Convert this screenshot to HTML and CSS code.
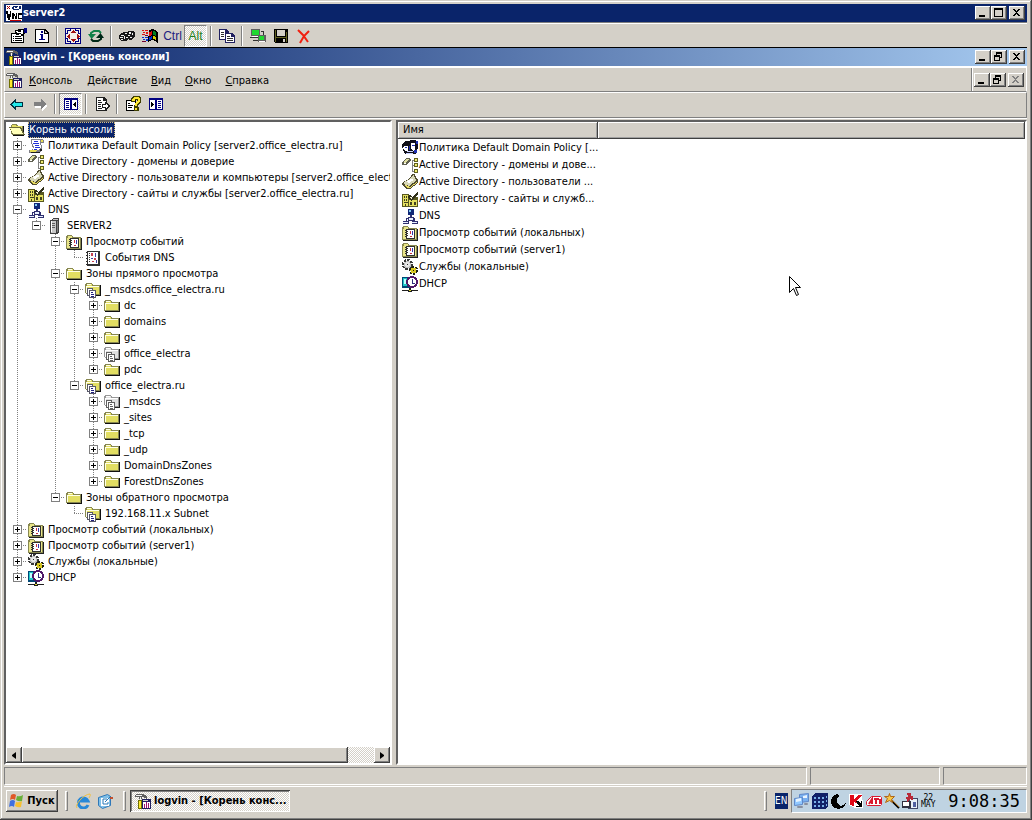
FILE: index.html
```html
<!DOCTYPE html>
<html lang="ru">
<head>
    <meta charset="UTF-8">
    <meta name="viewport" content="width=device-width, initial-scale=1.0">
    <title>server2</title>
    <link rel="stylesheet" href="styles.css">
</head>
<body>
    <svg class="sprite" aria-hidden="true">
        <symbol id="vnc" viewBox="0 0 16 16">
            <path fill="#fff" d="M0 0h16v16H0z"/>
            <path fill="#a00000" d="M1 1h1v1H1zM3 1h1v1H3zM2 2h1v1H2zM1 3h1v1H1zM3 3h1v1H3z"/>
            <path fill="#0a246a" d="M7 1h5v1H7zM6 2h2v2H6zM7 4h6v1H7zM13 1h2v3h-2zM9 2h2v1H9z"/>
            <path fill="#000" d="M0 6h2v3H0zM1 9h2v4H1zM2 12h2v3H2zM3 9h2v3H3zM4 6h1v3H4zM6 8h2v6H6zM8 9h1v2H8zM9 11h1v3H9zM10 8h1v6h-1zM12 8h4v2h-3v3h3v1h-4z"/>
            <path fill="#c00000" d="M4 15h11v1H4z"/>
        </symbol>
        <symbol id="mmc" viewBox="0 0 16 16">
            <path fill="#202060" d="M7 6h9v10H7z"/>
            <path fill="#fff" d="M8 9h7v6H8z"/>
            <path fill="#d4d0c8" d="M8 7h5v1H8z"/>
            <path fill="#a01070" d="M9 11h1v4H9zM11 9h1v6h-1zM13 10h1v5h-1z"/>
            <path fill="#606060" d="M1 1h8v1h2v1h1v3h-1V5H9V4H7v2H4V4H0V2h1z"/>
            <path fill="#f4f4f4" d="M1 2h6v1H1zM5 4h1v3H5z"/>
            <path fill="#707000" d="M3 7h4v9H3z"/>
            <path fill="#ffe830" d="M4 8h2v7H4z"/>
        </symbol>
        <symbol id="props" viewBox="0 0 16 16">
            <path fill="#000" d="M0 5h13v10H0z"/>
            <path fill="#fff" d="M1 6h11v8H1z"/>
            <path fill="#000" d="M2 8h1v1H2zM4 8h6v1H4zM2 10h1v1H2zM4 10h7v1H4zM2 12h1v1H2zM4 12h7v1H4z"/>
            <path fill="#000" d="M4 2h3V1h6v1h1v4h-1v1h-1v1h-2V6H8v1H5V5H4z"/>
            <path fill="#fff" d="M5 3h2v1h3V2h2v4h-2V5H6V4H5z"/>
            <path fill="#000080" d="M13 0h3v5h-3z"/>
        </symbol>
        <symbol id="info" viewBox="0 0 16 16">
            <path fill="#000" d="M1 1h10l4 4v10H1z"/>
            <path fill="#fff" d="M2 2h8v4h4v8H2z"/>
            <path fill="#d4d0c8" d="M11 3l2 2h-2z"/>
            <path fill="#000080" d="M7 3h2v2H7zM6 6h3v5h2v1H5v-1h2V7H6z"/>
        </symbol>
        <symbol id="fullscreen" viewBox="0 0 16 16">
            <path fill="#000080" d="M0 0h16v16H0z"/>
            <path fill="#f4f0e8" d="M1 1h14v14H1z"/>
            <path fill="#000080" d="M5 0h1v3H3v3H0V5h2V2h3zM10 0h1v2h3v3h2v1h-3V3h-3zM0 10h3v3h3v3H5v-2H2v-3H0zM13 10h3v1h-2v3h-3v2h-1v-3h3z"/>
            <path fill="#a01010" d="M8 2h1v1h1v1h1v1H6V4h1V3h1zM6 11h5v1h-1v1H9v1H8v-1H7v-1H6zM2 8h1V7h1V6h1v5H4v-1H3V9H2zM12 6v5h1v-1h1V9h1V8h-1V7h-1V6z"/>
        </symbol>
        <symbol id="refresh" viewBox="0 0 16 16">
            <path fill="none" stroke="#108048" stroke-width="2" d="M3 8V5l3-2h5l2 2"/>
            <path fill="#108048" d="M0 6l3.500 5L8 6z"/>
            <path fill="none" stroke="#002818" stroke-width="2" d="M13 8v3l-3 2H5l-2-2"/>
            <path fill="#002818" d="M8 10l4.500-5L16 10z"/>
        </symbol>
        <symbol id="keys" viewBox="0 0 16 16">
            <path fill="#181818" d="M1 6l4-2h3l2-1h5l1 2v3l-3 4h-3v-2l-3 3H2L0 11V9z"/>
            <path fill="#f0f0f0" d="M2 7h3v1H2zM1 9h3v1H1zM6 5h2v1H6zM5 8h1v3H5zM7 9h2v1H7zM10 4h2v2h-2zM9 7h2v1H9zM13 5h1v2h-1zM11 9h2v1h-2zM2 11h2v1H2z"/>
        </symbol>
        <symbol id="winlogo" viewBox="0 0 16 16">
            <path fill="#000" d="M7 2l3-1 3 1 3 2v11l-3-2-3-1-4 2z"/>
            <path fill="#e01010" d="M7 4l3-1v4l-3 1zM0 2h2v1H0zM3 2h3v1H3zM1 4h2v1H1zM4 4h2v2H4zM0 6h3v1H0z"/>
            <path fill="#008020" d="M11 3l3 1v4l-3-1z"/>
            <path fill="#0030d0" d="M7 9l3-1v3l-3 1zM0 9h2v1H0zM3 9h3v1H3zM1 11h2v1H1zM4 11h2v2H4z"/>
            <path fill="#d8d000" d="M11 8l3 1v3l-3-1z"/>
            <path fill="#700030" d="M3 7h3v1H3zM0 13h4v1H0z"/>
        </symbol>
        <symbol id="copy" viewBox="0 0 16 16">
            <path fill="#202060" d="M0 1h7l3 3v8H0z"/>
            <path fill="#fff" d="M1 2h5v3h3v6H1z"/>
            <path fill="#202060" d="M6 5h7l3 3v7H6z"/>
            <path fill="#fff" d="M7 6h5v3h3v5H7z"/>
            <path fill="#303030" d="M2 4h3v1H2zM2 6h3v1H2zM2 8h3v1H2zM8 8h3v1H8zM8 10h6v1H8zM8 12h6v1H8z"/>
        </symbol>
        <symbol id="link" viewBox="0 0 16 16">
            <path fill="#606060" d="M1 1h9v7H1zM8 7h8v7H8z"/>
            <path fill="#20d830" d="M2 2h7v5H2zM9 8h5v4H9z"/>
            <path fill="#303030" d="M0 9h8v1H0zM11 3h3v1h-3zM13 4h1v3h-1zM3 12h5v1H3z"/>
            <path fill="#fff" d="M2 8h6v1H2zM9 13h6v1H9z"/>
        </symbol>
        <symbol id="save" viewBox="0 0 16 16">
            <path fill="#000" d="M1 1h14v14H2l-1-1z"/>
            <path fill="#606020" d="M2 2h1v12H2zM13 4h1v10h-1zM3 9h10v1H3z"/>
            <path fill="#d4d0c8" d="M4 2h8v6H4zM10 11h2v3h-2z"/>
        </symbol>
        <symbol id="cross" viewBox="0 0 16 16">
            <path fill="none" stroke="#f02010" stroke-width="2" d="M2 2l5 5 5 7M13 3L8 8l-4 7"/>
        </symbol>
        <symbol id="back" viewBox="0 0 16 16">
            <path fill="#003040" d="M1 8l5-5h1v3h7v5H7v3H6L1 9z"/>
            <path fill="#20e8e8" d="M3 8l3-3v2h7v3H6v2L3 9z"/>
        </symbol>
        <symbol id="forward" viewBox="0 0 16 16">
            <path fill="#fff" d="M15 10l-5-5v3H3v4h7v3z"/>
            <path fill="#808080" d="M14 8L9 3v3H2v4h7v3z"/>
        </symbol>
        <symbol id="panes" viewBox="0 0 16 16">
            <path fill="#000080" d="M1 2h14v12H1z"/>
            <path fill="#fff" d="M2 4h5v9H2zM9 4h5v9H9z"/>
            <path fill="#000080" d="M3 5h3v1H3zM3 7h3v1H3zM3 9h3v1H3zM3 11h3v1H3z"/>
            <path fill="#000" d="M13 6v5l-3-2V8z"/>
        </symbol>
        <symbol id="panes2" viewBox="0 0 16 16">
            <path fill="#000080" d="M1 2h14v12H1z"/>
            <path fill="#fff" d="M2 4h5v9H2zM9 4h5v9H9z"/>
            <path fill="#000080" d="M10 5h3v1h-3zM10 7h3v1h-3zM10 9h3v1h-3zM10 11h3v1h-3z"/>
            <path fill="#000" d="M3 6v5l3-2V8z"/>
        </symbol>
        <symbol id="export" viewBox="0 0 16 16">
            <path fill="#202020" d="M2 1h8l3 3v11H2z"/>
            <path fill="#fff" d="M3 2h6v3h3v9H3z"/>
            <path fill="#202020" d="M4 4h3v1H4zM4 6h4v1H4zM4 8h3v1H4zM4 10h3v1H4zM4 12h4v1H4z"/>
            <path fill="#202020" d="M8 8h3V6h1l4 4-4 4h-1v-2H8z"/>
            <path fill="#fff" d="M9 9h3V8l2 2-2 2v-1H9z"/>
        </symbol>
        <symbol id="help" viewBox="0 0 16 16">
            <path fill="#000" d="M1 4h10v11H1z"/>
            <path fill="#fff" d="M2 5h8v9H2z"/>
            <path fill="#000" d="M3 7h2v1H3zM3 9h5v1H3zM3 11h4v1H3z"/>
            <path fill="#404000" d="M6 2l2-2h6l2 2v4l-3 3v2l1 1v2l-1 1H9v-4l1-3 2-2V4h-2v2H6z"/>
            <path fill="#ffe830" d="M7 3l2-2h4l2 2v3l-3 2v2h-2V7l3-2V3h-3v2H7zM10 12h2v2h-2z"/>
        </symbol>
        <symbol id="folder" viewBox="0 0 16 16">
            <path fill="#101010" d="M1 13h14V4h1v10H1z"/>
            <path fill="#888850" d="M0 13V3h1V2h6v1h1v1h7v9z"/>
            <path fill="#e2de62" d="M1 5h13v7H1zM2 3h5v2H2z"/>
            <path fill="#ffffe8" d="M1 5h13v1H1zM1 5h1v7H1zM2 3h4v1H2z"/>
        </symbol>
        <symbol id="folder-open" viewBox="0 0 16 16">
            <path fill="#101010" d="M4 4h11v10H4z"/>
            <path fill="#888850" d="M2 12V3h1V2h5v1h1v1h5v9H3z"/>
            <path fill="#e2de62" d="M3 3h4v1h6v8H3z"/>
            <path fill="#686838" d="M0 5h12l4 8H4z"/>
            <path fill="#ffffb8" d="M1 6h10l3 6H4z"/>
        </symbol>
        <symbol id="zone" viewBox="0 0 16 16">
            <path fill="#101010" d="M10 13h5V3h1v11h-6z"/>
            <path fill="#888850" d="M0 11V2h1V1h6v1h1v1h7v10H3z"/>
            <path fill="#e2de62" d="M1 4h13v8H2zM2 2h5v2H2z"/>
            <path fill="#ffffe8" d="M1 4h13v1H1zM1 4h1v7H1zM2 2h4v1H2z"/>
            <path fill="#585868" d="M2 6h6v2h3v8H4v-2H2z"/>
            <path fill="#fff" d="M3 7h4v1H4v5H3zM5 9h5v6H5z"/>
            <path fill="#202080" d="M6 10h2v1H6zM6 12h3v1H6zM6 14h3v1H6z"/>
        </symbol>
        <symbol id="zone-gray" viewBox="0 0 16 16">
            <path fill="#202020" d="M10 13h5V3h1v11h-6z"/>
            <path fill="#989898" d="M0 11V2h1V1h6v1h1v1h7v10H3z"/>
            <path fill="#e0e0e0" d="M1 4h13v8H2zM2 2h5v2H2z"/>
            <path fill="#fff" d="M1 4h13v1H1zM1 4h1v7H1zM2 2h4v1H2z"/>
            <path fill="#606060" d="M2 6h6v2h3v8H4v-2H2z"/>
            <path fill="#fff" d="M3 7h4v1H4v5H3zM5 9h5v6H5z"/>
            <path fill="#606060" d="M6 10h2v1H6zM6 12h3v1H6zM6 14h3v1H6z"/>
        </symbol>
        <symbol id="policy" viewBox="0 0 16 16">
            <path fill="#808088" d="M3 1h11l2 1v3h-3l1 3v4l-3 3H1v-3h3l1-2-2-5z"/>
            <path fill="#fff" d="M4 2h8v3l1 4-2 3H5l1-3-2-4z"/>
            <path fill="#e8dc50" d="M13 2h2v2h-2zM2 12h7l-1 2H2z"/>
            <path fill="#2030d8" d="M6 3h4v1H6zM5 5h6v1H5zM7 7h4v1H7zM7 9h5v1H7zM6 11h3v1H6z"/>
            <path fill="#202020" d="M3 14h9v1H3zM12 11h2v2h-2z"/>
        </symbol>
        <symbol id="policy-people" viewBox="0 0 16 16">
            <path fill="#101018" d="M1 3l3-2h3l2-1h5l2 3v5l-2 3v3H3L1 10 0 6z"/>
            <path fill="#fff" d="M2 6h4v5H3L1 8zM9 3h4v6l-2 2-2-3z"/>
            <path fill="#2030b0" d="M14 1h2v3h-2zM3 7h2v1H3zM10 5h3v1h-3zM12 10h3v3h-3zM7 6h1v4H7z"/>
            <path fill="#c8d0ff" d="M5 11h6v1H5zM4 13h7v1H4z"/>
        </symbol>
        <symbol id="domains" viewBox="0 0 16 16">
            <path fill="#606050" d="M0 5l4-4h4l1 2-5 5H0z"/>
            <path fill="#e0e0a0" d="M1 5l4-3h2L3 6z"/>
            <path fill="#fff" d="M2 6h2v1H2z"/>
            <path fill="#808080" d="M10 3h1v12h-1zM11 3h1v1h-1zM11 8h1v1h-1zM10 14h2v1h-2z"/>
            <path fill="#606020" d="M12 1h4v4h-4zM12 6h4v4h-4zM12 12h4v4h-4z"/>
            <path fill="#f0ec70" d="M13 2h2v2h-2zM13 7h2v2h-2zM13 13h2v2h-2z"/>
        </symbol>
        <symbol id="users" viewBox="0 0 16 16">
            <path fill="#504c30" d="M0 9l8-5 2-4h3l1 4 2 2v3l-8 6H4l-4-4z"/>
            <path fill="#d8d8b8" d="M1 9l8-5 2-3h1l1 4 2 1-8 6-3-1z"/>
            <path fill="#fff" d="M4 8l5-3 3 1-5 3z"/>
            <path fill="#e8dc60" d="M2 11h2l4 2 7-5v1l-7 5H5z"/>
        </symbol>
        <symbol id="sites" viewBox="0 0 16 16">
            <path fill="#585820" d="M0 3h7v3h9v10H0z"/>
            <path fill="#e4e060" d="M1 4h5v11H1zM7 9h8v6H7z"/>
            <path fill="#404020" d="M2 5h1v2H2zM4 5h1v2H4zM2 8h1v2H2zM4 8h1v2H4zM2 11h4v1H2zM3 13h1v2H3zM8 11h2v3H8zM12 11h2v3h-2z"/>
            <path fill="#303018" d="M5 6l3-2 2 2 6-5v3l-7 6z"/>
            <path fill="#f0f0d0" d="M7 6h2l1 1 5-4-6 5z"/>
        </symbol>
        <symbol id="dns" viewBox="0 0 16 16">
            <circle cx="9" cy="4" r="3.500" fill="#102878"/>
            <path fill="#80c8f0" d="M7 2h2v2H7z"/>
            <path fill="#303070" d="M8 7h2v2H8zM6 9h6v4H6zM4 10h2v1H4zM4 11h1v2H4zM12 10h1v3h-1zM1 13h6v3H1zM10 13h6v3h-6z"/>
            <path fill="#e8f0ff" d="M7 10h4v2H7zM1 14h5v1H1zM10 14h5v1h-5z"/>
        </symbol>
        <symbol id="server" viewBox="0 0 16 16">
            <path fill="#404040" d="M6 0h6v14l-2 2H3V2h1z"/>
            <path fill="#c8c8c8" d="M4 3h5v12H4zM6 1h5l-1 1H5z"/>
            <path fill="#808080" d="M10 3l1-1v11l-1 1z"/>
            <path fill="#606060" d="M5 5h3v1H5zM5 7h3v1H5zM5 9h3v1H5z"/>
            <path fill="#fff" d="M4 3h1v11H4z"/>
        </symbol>
        <symbol id="events" viewBox="0 0 16 16">
            <path fill="#202020" d="M1 15h14V4h1v12H1z"/>
            <path fill="#888850" d="M0 15V2h1V1h5v1h1v1h8v12z"/>
            <path fill="#e8e488" d="M1 4h13v10H1zM2 2h4v2H2z"/>
            <path fill="#303030" d="M4 4h9v10H4z"/>
            <path fill="#fff" d="M5 5h7v8H5z"/>
            <path fill="#303030" d="M3 5h1v1H3zM3 7h1v1H3zM3 9h1v1H3zM3 11h1v1H3zM5 6h1v1H5zM5 8h1v1H5zM5 10h1v1H5z"/>
            <path fill="#c83040" d="M8 6h1v3H8zM8 11h2v1H8z"/>
            <path fill="#3838b0" d="M10 6h1v4h-1z"/>
        </symbol>
        <symbol id="eventlog" viewBox="0 0 16 16">
            <path fill="#303030" d="M2 1h13v15H2z"/>
            <path fill="#fff" d="M3 2h10v12H3z"/>
            <path fill="#303030" d="M1 2h1v1H1zM1 5h1v1H1zM1 8h1v1H1zM1 11h1v1H1zM1 14h1v1H1zM4 3h1v1H4zM4 5h1v1H4zM4 7h1v1H4zM4 9h1v1H4zM4 11h1v1H4z"/>
            <path fill="#c84050" d="M6 3h2v3H6zM9 8h2v2H9zM7 11h2v1H7z"/>
            <path fill="#4040a0" d="M10 3h1v4h-1zM6 8h2v1H6zM11 10h1v3h-1z"/>
        </symbol>
        <symbol id="gears" viewBox="0 0 16 16">
            <circle cx="5.500" cy="5.500" r="4" fill="#e8e8e8" stroke="#383838" stroke-width="3" stroke-dasharray="2 1"/>
            <circle cx="5.500" cy="5.500" r="3" fill="none" stroke="#c0c0c0"/>
            <circle cx="5.500" cy="5.500" r="1" fill="#303030"/>
            <circle cx="11.500" cy="11.500" r="3" fill="#f0e060" stroke="#202010" stroke-width="3" stroke-dasharray="2 1"/>
            <circle cx="11.500" cy="11.500" r="2" fill="#fff" stroke="#d8c820" stroke-width="2"/>
            <circle cx="11.500" cy="11.500" r="1" fill="#202010"/>
        </symbol>
        <symbol id="dhcp" viewBox="0 0 16 16">
            <path fill="#004878" d="M0 1h9v11H0z"/>
            <path fill="#20c8c8" d="M1 2h7v8H1z"/>
            <path fill="#c0ffff" d="M2 3h2v5H2z"/>
            <circle cx="10" cy="6" r="5" fill="#fff" stroke="#501868" stroke-width="2"/>
            <path fill="#303080" d="M10 3h1v4h2v1h-3z"/>
            <path fill="#202020" d="M7 12h2v2h7v1h-6v1H6v-1H0v-1h7z"/>
            <path fill="#e0d830" d="M7 14h2v1H7z"/>
        </symbol>
        <symbol id="min" viewBox="0 0 16 14"><path fill="#000" d="M4 9h6v2H4z"/></symbol>
        <symbol id="max" viewBox="0 0 16 14"><path fill="#000" d="M3 2h9v9H3zM4 4v6h7V4z" fill-rule="evenodd"/></symbol>
        <symbol id="restore" viewBox="0 0 16 14">
            <path fill="#000" fill-rule="evenodd" d="M5 2h6v6h-2v3H3V5h2zM6 4v1h3v2h1V4zM4 7v3h4V7z"/>
        </symbol>
        <symbol id="close" viewBox="0 0 16 14"><path fill="currentColor" d="M4 3h2v1h1v1h1V4h1V3h2v1h-1v1H9v1H8v1h1v1h1v1h1v1H9V9H8V8H7v1H6v1H4V9h1V8h1V7h1V6H6V5H5V4H4z"/></symbol>
        <symbol id="flag" viewBox="0 0 16 16">
            <path fill="#e05828" d="M2 2q3-2 5 0L6 7q-2-2-5 0z"/>
            <path fill="#68b038" d="M8 3q3 1 6-1l-1 6q-3 1-6-1z"/>
            <path fill="#4070e0" d="M1 8q3-2 5 0l-1 6q-2-2-5 0z"/>
            <path fill="#f8c030" d="M7 9q3 1 6-1l-1 6q-3 1-6-1z"/>
        </symbol>
        <symbol id="ie" viewBox="0 0 16 16">
            <path fill="none" stroke="#2888d8" stroke-width="3" d="M13 12a5 5 0 1 1 0-4H5"/>
            <path fill="none" stroke="#f0c040" stroke-width="1" d="M2 15C-1 12 9 1 15 1q1 1-1 4"/>
        </symbol>
        <symbol id="desktop" viewBox="0 0 16 16">
            <path fill="#80c0e8" stroke="#3078b8" d="M1.500 4.500l9-3 3 2v9l-8 3-4-3z"/>
            <path fill="#fff" d="M4 5h8v8H4z"/>
            <path fill="none" stroke="#2878b8" d="M10 6H6v5h5V9M8 9l6-6"/>
            <path fill="#c05030" d="M13 4h3v2h-3z"/>
        </symbol>
        <symbol id="net" viewBox="0 0 16 16">
            <path fill="#78b0f0" stroke="#6088c8" d="M5.500 1.500l9-1v8l-9 1z"/>
            <path fill="#90c8ff" stroke="#6088c8" d="M.5 5.500l8-1v7l-8 1z"/>
            <path fill="#e8f4ff" d="M2 6l5-1v3L2 9zM9 3l4-1v3H9z"/>
            <path fill="#d8d8e8" stroke="#8890a0" d="M3.500 13.500h5v1h-5zM10.500 10.500h3v1h-3z"/>
        </symbol>
        <symbol id="cube" viewBox="0 0 16 16">
            <path fill="#102068" d="M0 3l3-3h13v13l-3 3H0z"/>
            <path fill="#78b0e8" d="M2 4h2v2H2zM6 4h2v2H6zM10 4h2v2h-2zM2 8h2v2H2zM6 8h2v2H6zM10 8h2v2h-2zM2 12h2v2H2zM6 12h2v2H6zM10 12h2v2h-2zM14 3h1v2h-1zM14 7h1v2h-1zM14 11h1v2h-1z"/>
        </symbol>
        <symbol id="moon" viewBox="0 0 16 16">
            <path fill="#000" d="M7 1a7.500 7.500 0 1 0 9 8a4.500 4.500 0 0 1-9-2a6 6 0 0 1 2-4z"/>
        </symbol>
        <symbol id="kav" viewBox="0 0 16 16">
            <path fill="#fff" d="M1 1h13v6h1v8H7l-6-3z"/>
            <path fill="#e00818" d="M2 2h4v4l4-4h4L8 8l2 2H8L6 9v4L2 12z"/>
            <path fill="#000" d="M8 8h2l3 3V8h1v6H8v-1h3z"/>
        </symbol>
        <symbol id="ati" viewBox="0 0 16 16">
            <path fill="#fff" stroke="#d81830" d="M5.500 3.500h9l1 1v7l-1 1h-13l-1-1v-3z"/>
            <path fill="none" stroke="#d81830" stroke-width="2" d="M3 11l3-5v5M8 6h5M10 6v5M14 6v5"/>
        </symbol>
        <symbol id="wand" viewBox="0 0 16 16">
            <path fill="none" stroke="#000" stroke-width="2" d="M7 7l8 8"/>
            <path fill="none" stroke="#b07828" d="M7 6l8 8"/>
            <path fill="#f8c848" stroke="#b06818" d="M5.500.5l1 3h4l-3 3 1 3-3-2-4 2 2-4-3-2h4z"/>
        </symbol>
        <symbol id="remote" viewBox="0 0 16 16">
            <path fill="#404868" d="M6 5h10v11H6z"/>
            <path fill="#e8f0f8" d="M8 6h7v9H8z"/>
            <path fill="#303040" d="M0 8h9v7H0z"/>
            <path fill="#fff" d="M1 9h6v4H1z"/>
            <path fill="#b82838" d="M5 0h4v3h2v4H9L8 6 5 9V6H4V4h2z"/>
            <path fill="#5060a0" d="M11 9h3v5h-3z"/>
        </symbol>
    </svg>

    <div class="window">
        <header class="titlebar">
            <svg class="icon"><use href="#vnc"/></svg>
            <h1>server2</h1>
            <div class="controls">
                <button aria-label="Свернуть"><svg><use href="#min"/></svg></button>
                <button aria-label="Развернуть"><svg><use href="#max"/></svg></button>
                <button class="close" aria-label="Закрыть"><svg><use href="#close"/></svg></button>
            </div>
        </header>

        <div class="toolbar viewer-tools">
            <button aria-label="Параметры"><svg class="icon"><use href="#props"/></svg></button>
            <button aria-label="Сведения"><svg class="icon"><use href="#info"/></svg></button>
            <span class="sep"></span>
            <button aria-label="Во весь экран"><svg class="icon"><use href="#fullscreen"/></svg></button>
            <button aria-label="Обновить"><svg class="icon smooth"><use href="#refresh"/></svg></button>
            <span class="sep"></span>
            <button aria-label="Ctrl-Alt-Del"><svg class="icon"><use href="#keys"/></svg></button>
            <button aria-label="Ctrl-Esc"><svg class="icon"><use href="#winlogo"/></svg></button>
            <button class="key ctrl">Ctrl</button>
            <button class="key alt pressed">Alt</button>
            <span class="sep"></span>
            <button aria-label="Копировать"><svg class="icon"><use href="#copy"/></svg></button>
            <span class="sep"></span>
            <button aria-label="Новое соединение"><svg class="icon"><use href="#link"/></svg></button>
            <button aria-label="Сохранить"><svg class="icon"><use href="#save"/></svg></button>
            <button aria-label="Отключить"><svg class="icon smooth"><use href="#cross"/></svg></button>
        </div>

        <main class="remote">
            <header class="titlebar console-title">
                <svg class="icon"><use href="#mmc"/></svg>
                <h2>logvin - [Корень консоли]</h2>
                <div class="controls">
                    <button aria-label="Свернуть"><svg><use href="#min"/></svg></button>
                    <button aria-label="Восстановить"><svg><use href="#restore"/></svg></button>
                    <button class="close" aria-label="Закрыть"><svg><use href="#close"/></svg></button>
                </div>
            </header>

            <nav class="menubar">
                <svg class="icon"><use href="#mmc"/></svg>
                <button><span><u>К</u>онсоль</span></button>
                <button><span><u>Д</u>ействие</span></button>
                <button><span><u>В</u>ид</span></button>
                <button><span><u>О</u>кно</span></button>
                <button><span><u>С</u>правка</span></button>
                <div class="controls">
                    <button aria-label="Свернуть"><svg><use href="#min"/></svg></button>
                    <button aria-label="Восстановить"><svg><use href="#restore"/></svg></button>
                    <button class="close" aria-label="Закрыть" disabled><svg><use href="#close"/></svg></button>
                </div>
            </nav>

            <div class="toolbar console-tools">
                <button aria-label="Назад"><svg class="icon"><use href="#back"/></svg></button>
                <button aria-label="Вперед" disabled><svg class="icon"><use href="#forward"/></svg></button>
                <span class="sep"></span>
                <button class="pressed" aria-label="Дерево консоли"><svg class="icon"><use href="#panes"/></svg></button>
                <span class="sep"></span>
                <button aria-label="Экспорт списка"><svg class="icon"><use href="#export"/></svg></button>
                <span class="sep"></span>
                <button aria-label="Справка"><svg class="icon"><use href="#help"/></svg></button>
                <button aria-label="Область действий"><svg class="icon"><use href="#panes2"/></svg></button>
            </div>

            <div class="panes">
                <section class="pane tree-pane">
                    <div class="tree">
                        <div class="row"><svg class="icon"><use href="#folder-open"/></svg><span class="label selected">Корень консоли</span></div>
                        <ul>
                            <li><div class="row"><span class="branch"><i class="box plus"></i></span><svg class="icon"><use href="#policy"/></svg><span class="label">Политика Default Domain Policy [server2.office_electra.ru]</span></div></li>
                            <li><div class="row"><span class="branch"><i class="box plus"></i></span><svg class="icon"><use href="#domains"/></svg><span class="label">Active Directory - домены и доверие</span></div></li>
                            <li><div class="row"><span class="branch"><i class="box plus"></i></span><svg class="icon"><use href="#users"/></svg><span class="label">Active Directory - пользователи и компьютеры [server2.office_electr</span></div></li>
                            <li><div class="row"><span class="branch"><i class="box plus"></i></span><svg class="icon"><use href="#sites"/></svg><span class="label">Active Directory - сайты и службы [server2.office_electra.ru]</span></div></li>
                            <li>
                                <div class="row"><span class="branch"><i class="box"></i></span><svg class="icon"><use href="#dns"/></svg><span class="label">DNS</span></div>
                                <ul>
                                    <li>
                                        <div class="row"><span class="branch"><i class="box"></i></span><svg class="icon"><use href="#server"/></svg><span class="label">SERVER2</span></div>
                                        <ul>
                                            <li>
                                                <div class="row"><span class="branch"><i class="box"></i></span><svg class="icon"><use href="#events"/></svg><span class="label">Просмотр событий</span></div>
                                                <ul>
                                                    <li><div class="row"><span class="branch"></span><svg class="icon"><use href="#eventlog"/></svg><span class="label">События DNS</span></div></li>
                                                </ul>
                                            </li>
                                            <li>
                                                <div class="row"><span class="branch"><i class="box"></i></span><svg class="icon"><use href="#folder"/></svg><span class="label">Зоны прямого просмотра</span></div>
                                                <ul>
                                                    <li>
                                                        <div class="row"><span class="branch"><i class="box"></i></span><svg class="icon"><use href="#zone"/></svg><span class="label">_msdcs.office_electra.ru</span></div>
                                                        <ul>
                                                            <li><div class="row"><span class="branch"><i class="box plus"></i></span><svg class="icon"><use href="#folder"/></svg><span class="label">dc</span></div></li>
                                                            <li><div class="row"><span class="branch"><i class="box plus"></i></span><svg class="icon"><use href="#folder"/></svg><span class="label">domains</span></div></li>
                                                            <li><div class="row"><span class="branch"><i class="box plus"></i></span><svg class="icon"><use href="#folder"/></svg><span class="label">gc</span></div></li>
                                                            <li><div class="row"><span class="branch"><i class="box plus"></i></span><svg class="icon"><use href="#zone-gray"/></svg><span class="label">office_electra</span></div></li>
                                                            <li><div class="row"><span class="branch"><i class="box plus"></i></span><svg class="icon"><use href="#folder"/></svg><span class="label">pdc</span></div></li>
                                                        </ul>
                                                    </li>
                                                    <li>
                                                        <div class="row"><span class="branch"><i class="box"></i></span><svg class="icon"><use href="#zone"/></svg><span class="label">office_electra.ru</span></div>
                                                        <ul>
                                                            <li><div class="row"><span class="branch"><i class="box plus"></i></span><svg class="icon"><use href="#zone-gray"/></svg><span class="label">_msdcs</span></div></li>
                                                            <li><div class="row"><span class="branch"><i class="box plus"></i></span><svg class="icon"><use href="#folder"/></svg><span class="label">_sites</span></div></li>
                                                            <li><div class="row"><span class="branch"><i class="box plus"></i></span><svg class="icon"><use href="#folder"/></svg><span class="label">_tcp</span></div></li>
                                                            <li><div class="row"><span class="branch"><i class="box plus"></i></span><svg class="icon"><use href="#folder"/></svg><span class="label">_udp</span></div></li>
                                                            <li><div class="row"><span class="branch"><i class="box plus"></i></span><svg class="icon"><use href="#folder"/></svg><span class="label">DomainDnsZones</span></div></li>
                                                            <li><div class="row"><span class="branch"><i class="box plus"></i></span><svg class="icon"><use href="#folder"/></svg><span class="label">ForestDnsZones</span></div></li>
                                                        </ul>
                                                    </li>
                                                </ul>
                                            </li>
                                            <li>
                                                <div class="row"><span class="branch"><i class="box"></i></span><svg class="icon"><use href="#folder"/></svg><span class="label">Зоны обратного просмотра</span></div>
                                                <ul>
                                                    <li><div class="row"><span class="branch"></span><svg class="icon"><use href="#zone"/></svg><span class="label">192.168.11.x Subnet</span></div></li>
                                                </ul>
                                            </li>
                                        </ul>
                                    </li>
                                </ul>
                            </li>
                            <li><div class="row"><span class="branch"><i class="box plus"></i></span><svg class="icon"><use href="#events"/></svg><span class="label">Просмотр событий (локальных)</span></div></li>
                            <li><div class="row"><span class="branch"><i class="box plus"></i></span><svg class="icon"><use href="#events"/></svg><span class="label">Просмотр событий (server1)</span></div></li>
                            <li><div class="row"><span class="branch"><i class="box plus"></i></span><svg class="icon"><use href="#gears"/></svg><span class="label">Службы (локальные)</span></div></li>
                            <li><div class="row"><span class="branch"><i class="box plus"></i></span><svg class="icon"><use href="#dhcp"/></svg><span class="label">DHCP</span></div></li>
                        </ul>
                    </div>
                    <div class="scrollbar">
                        <button aria-label="Влево"><svg viewBox="0 0 4 7"><path d="M4 0v7L0 4V3z"/></svg></button>
                        <span class="thumb"></span>
                        <button class="right" aria-label="Вправо"><svg viewBox="0 0 4 7"><path d="M0 0v7l4-3V3z"/></svg></button>
                    </div>
                </section>

                <section class="pane list-pane">
                    <table>
                        <thead>
                            <tr><th class="name">Имя</th><th></th></tr>
                        </thead>
                        <tbody>
                            <tr><td><div class="item"><svg class="icon"><use href="#policy-people"/></svg><span>Политика Default Domain Policy [...</span></div></td></tr>
                            <tr><td><div class="item"><svg class="icon"><use href="#domains"/></svg><span>Active Directory - домены и дове...</span></div></td></tr>
                            <tr><td><div class="item"><svg class="icon"><use href="#users"/></svg><span>Active Directory - пользователи ...</span></div></td></tr>
                            <tr><td><div class="item"><svg class="icon"><use href="#sites"/></svg><span>Active Directory - сайты и служб...</span></div></td></tr>
                            <tr><td><div class="item"><svg class="icon"><use href="#dns"/></svg><span>DNS</span></div></td></tr>
                            <tr><td><div class="item"><svg class="icon"><use href="#events"/></svg><span>Просмотр событий (локальных)</span></div></td></tr>
                            <tr><td><div class="item"><svg class="icon"><use href="#events"/></svg><span>Просмотр событий (server1)</span></div></td></tr>
                            <tr><td><div class="item"><svg class="icon"><use href="#gears"/></svg><span>Службы (локальные)</span></div></td></tr>
                            <tr><td><div class="item"><svg class="icon"><use href="#dhcp"/></svg><span>DHCP</span></div></td></tr>
                        </tbody>
                    </table>
                    <svg class="cursor" viewBox="0 0 12 21"><path fill="#fff" stroke="#000" d="M.5.5v16l4-4 3 7 2-1-3-7h5z"/></svg>
                </section>
            </div>

            <div class="statusbar">
                <span></span>
                <span class="mid"></span>
                <span class="small"></span>
            </div>

            <footer class="taskbar">
                <button class="start"><svg class="icon smooth"><use href="#flag"/></svg>Пуск</button>
                <span class="grip"></span>
                <a href="#" aria-label="Internet Explorer"><svg class="icon smooth"><use href="#ie"/></svg></a>
                <a href="#" aria-label="Свернуть все окна"><svg class="icon smooth"><use href="#desktop"/></svg></a>
                <span class="grip"></span>
                <button class="task"><svg class="icon"><use href="#mmc"/></svg><span>logvin - [Корень конс...</span></button>
                <span class="grip tray-grip"></span>
                <span class="lang">EN</span>
                <div class="tray">
                    <svg class="icon smooth"><use href="#net"/></svg>
                    <svg class="icon"><use href="#cube"/></svg>
                    <svg class="icon"><use href="#moon"/></svg>
                    <svg class="icon"><use href="#kav"/></svg>
                    <svg class="icon smooth"><use href="#ati"/></svg>
                    <svg class="icon smooth"><use href="#wand"/></svg>
                    <svg class="icon"><use href="#remote"/></svg>
                    <span class="date">22<br>MAY</span>
                    <time>9:08:35</time>
                </div>
            </footer>
        </main>
    </div>
</body>
</html>
```
FILE: styles.css
```css
* {
    box-sizing: border-box;
}

body {
    margin: 0;
    font-family: "DejaVu Sans Condensed", "DejaVu Sans", sans-serif;
    font-size: 11px;
    line-height: 16px;
    color: #000;
    background: #d4d0c8;
}

ul {
    margin: 0;
    padding: 0;
    list-style: none;
}

button {
    display: flex;
    align-items: center;
    justify-content: center;
    padding: 0;
    border: none;
    background: none;
    color: inherit;
    font: inherit;
}

.sprite {
    display: none;
}

.icon {
    flex: none;
    width: 16px;
    height: 16px;
    shape-rendering: crispEdges;
}

.smooth {
    shape-rendering: auto;
}

/* Outer frame */
.window {
    display: flex;
    flex-direction: column;
    height: 100vh;
    padding: 4px 5px 4px 4px;
    box-shadow: inset -1px -1px #404040, inset 1px 1px #d4d0c8, inset -2px -2px #808080, inset 2px 2px #fff;
}

.titlebar {
    display: flex;
    align-items: center;
    height: 18px;
    padding: 0 2px;
    background: #0a246a;
    color: #fff;
}

.titlebar h1,
.titlebar h2 {
    margin: 0 0 0 1px;
    font-size: 11px;
    font-weight: bold;
}

.console-title {
    background: linear-gradient(to right, #0a246a, #a6caf0);
}

.controls {
    display: flex;
    margin-left: auto;
}

.controls button {
    width: 16px;
    height: 14px;
    background: #d4d0c8;
    color: #000;
    box-shadow: inset -1px -1px #404040, inset 1px 1px #fff, inset -2px -2px #808080;
}

.controls svg {
    width: 16px;
    height: 14px;
    shape-rendering: crispEdges;
}

.controls .close {
    margin-left: 2px;
}

.controls button:disabled {
    color: #808080;
}

/* Toolbars */
.toolbar {
    display: flex;
    align-items: center;
}

.toolbar button {
    width: 23px;
    height: 22px;
}

.toolbar .sep {
    width: 2px;
    height: 20px;
    margin: 0 3px;
    border-left: 1px solid #808080;
    border-right: 1px solid #fff;
}

.toolbar .pressed {
    border: 1px solid;
    border-color: #808080 #fff #fff #808080;
    background: repeating-conic-gradient(#fff 0 25%, #d4d0c8 0 50%) 0 0 / 2px 2px;
}

.viewer-tools {
    height: 26px;
    padding: 1px 3px 0;
    border-top: 1px solid #808080;
    border-bottom: 1px solid #000;
    box-shadow: inset 0 1px #fff;
}

.toolbar .key {
    font-family: "Liberation Sans", Arial, sans-serif;
    font-size: 12px;
}

.ctrl {
    color: #202080;
}

.alt {
    color: #208020;
}

/* Remote desktop */
.remote {
    flex: 1;
    display: flex;
    flex-direction: column;
    min-height: 0;
}

.menubar {
    display: flex;
    align-items: center;
    height: 26px;
    padding-left: 1px;
    border: 1px solid #fff;
    border-top-width: 2px;
    border-bottom-color: #808080;
}

.menubar > button {
    padding: 2px 8px 0 7px;
}

.menubar > button + button {
    padding-right: 7px;
}

.menubar .controls {
    align-items: center;
    height: 100%;
    padding: 0 2px;
    border-left: 1px solid #808080;
    box-shadow: inset 1px 0 #fff;
}

.console-tools {
    height: 26px;
    padding-bottom: 2px;
    border: 1px solid #fff;
    border-right-color: #808080;
    border-bottom-color: #808080;
}

/* Tree and list */
.panes {
    flex: 1;
    display: flex;
    gap: 4px;
    min-height: 0;
    padding-top: 1px;
    border-top: 1px solid #fff;
}

.pane {
    border: 2px solid;
    border-color: #606060 #fff #fff #606060;
    background: #fff;
    overflow: hidden;
}

.tree-pane {
    display: flex;
    flex-direction: column;
    flex: none;
    width: 388px;
}

.tree {
    flex: 1;
    padding-left: 3px;
    overflow: hidden;
}

.row {
    display: flex;
    align-items: center;
    height: 16px;
    white-space: nowrap;
}

.label {
    margin-left: 3px;
    padding: 0 2px 0 1px;
}

.selected {
    background: #0a246a;
    color: #fff;
    outline: 1px dotted #d8c080;
    outline-offset: -1px;
}

.tree ul ul {
    padding-left: 19px;
}

/* Dotted guide lines */
.tree li:not(:last-child) {
    background: linear-gradient(#808080 50%, transparent 50%) 8px 0 / 1px 2px repeat-y;
}

.branch {
    flex: none;
    width: 19px;
    height: 16px;
    padding: 3px 4px;
    background: repeating-linear-gradient(to right, #808080 0 1px, transparent 1px 2px) 8px 7px / 10px 1px no-repeat;
}

.tree li:last-child > .row > .branch {
    background: repeating-linear-gradient(to right, #808080 0 1px, transparent 1px 2px) 8px 7px / 10px 1px no-repeat,
        repeating-linear-gradient(#808080 0 1px, transparent 1px 2px) 8px 0 / 1px 8px no-repeat;
}

.box {
    display: block;
    width: 9px;
    height: 9px;
    border: 1px solid #808080;
    background: linear-gradient(#000, #000) 1px 3px / 5px 1px no-repeat, #fff;
}

.plus {
    background: linear-gradient(#000, #000) 1px 3px / 5px 1px no-repeat,
        linear-gradient(#000, #000) 3px 1px / 1px 5px no-repeat, #fff;
}

.scrollbar {
    display: flex;
    height: 16px;
    background: repeating-conic-gradient(#fff 0 25%, #d4d0c8 0 50%) 0 0 / 2px 2px;
}

.scrollbar button,
.thumb {
    width: 16px;
    background: #d4d0c8;
    box-shadow: inset -1px -1px #404040, inset 1px 1px #fff, inset -2px -2px #808080;
}

.scrollbar svg {
    width: 4px;
    height: 7px;
}

.scrollbar .thumb {
    width: 85%;
}

.scrollbar .right {
    margin-left: auto;
}

.list-pane {
    position: relative;
    flex: 1;
}

table {
    width: 100%;
    border-collapse: separate;
    border-spacing: 0;
    table-layout: fixed;
}

th {
    height: 17px;
    padding: 0 5px 2px;
    background: #d4d0c8;
    box-shadow: inset -1px -1px #404040, inset 1px 1px #fff, inset -2px -2px #a0a0a0;
    font-weight: normal;
    text-align: left;
    line-height: 15px;
}

th.name {
    width: 200px;
}

td {
    height: 17px;
    padding: 0 4px;
}

.item {
    display: flex;
    align-items: center;
    gap: 1px;
    white-space: nowrap;
}

.cursor {
    position: absolute;
    left: 391px;
    top: 154px;
    width: 12px;
    height: 21px;
}

/* Status bar */
.statusbar {
    display: flex;
    gap: 3px;
    height: 20px;
    padding-top: 2px;
}

.statusbar span {
    flex: 1;
    border: 1px solid;
    border-color: #808080 #fff #fff #808080;
}

.statusbar .mid {
    flex: none;
    width: 130px;
}

.statusbar .small {
    flex: none;
    width: 84px;
}

/* Taskbar */
.taskbar {
    display: flex;
    align-items: center;
    height: 30px;
    margin-top: 1px;
    padding: 0 0 2px 2px;
    border-top: 1px solid #fff;
}

.start {
    gap: 2px;
    width: 52px;
    height: 22px;
    background: #d4d0c8;
    box-shadow: inset -1px -1px #404040, inset 1px 1px #fff, inset -2px -2px #808080;
    font-weight: bold;
}

.grip {
    width: 3px;
    height: 20px;
    margin: 0 4px 0 7px;
    border: 1px solid;
    border-color: #fff #808080 #808080 #fff;
}

.taskbar a {
    display: flex;
    margin: 0 3px;
}

.task {
    justify-content: flex-start;
    gap: 3px;
    width: 160px;
    height: 22px;
    padding-left: 5px;
    background: repeating-conic-gradient(#fff 0 25%, #d4d0c8 0 50%) 0 0 / 2px 2px;
    box-shadow: inset 1px 1px #404040, inset -1px -1px #fff, inset 2px 2px #808080;
    font-weight: bold;
    white-space: nowrap;
}

.grip.tray-grip {
    margin: 0 8px 0 auto;
}

.lang {
    width: 13px;
    margin-right: 3px;
    background: #0a246a;
    color: #fff;
    font-size: 10px;
}

.tray {
    display: flex;
    align-items: center;
    gap: 2px;
    width: 236px;
    height: 24px;
    padding: 0 6px 0 2px;
    border: 1px solid;
    border-color: #808080 #fff #fff #808080;
    background: #bfd3e2;
}

.date {
    margin-left: 1px;
    font-family: "DejaVu Sans Mono", monospace;
    font-size: 8px;
    line-height: 7px;
    text-align: center;
}

time {
    margin-left: auto;
    font-family: "DejaVu Sans Mono", monospace;
    font-size: 17px;
}
```
